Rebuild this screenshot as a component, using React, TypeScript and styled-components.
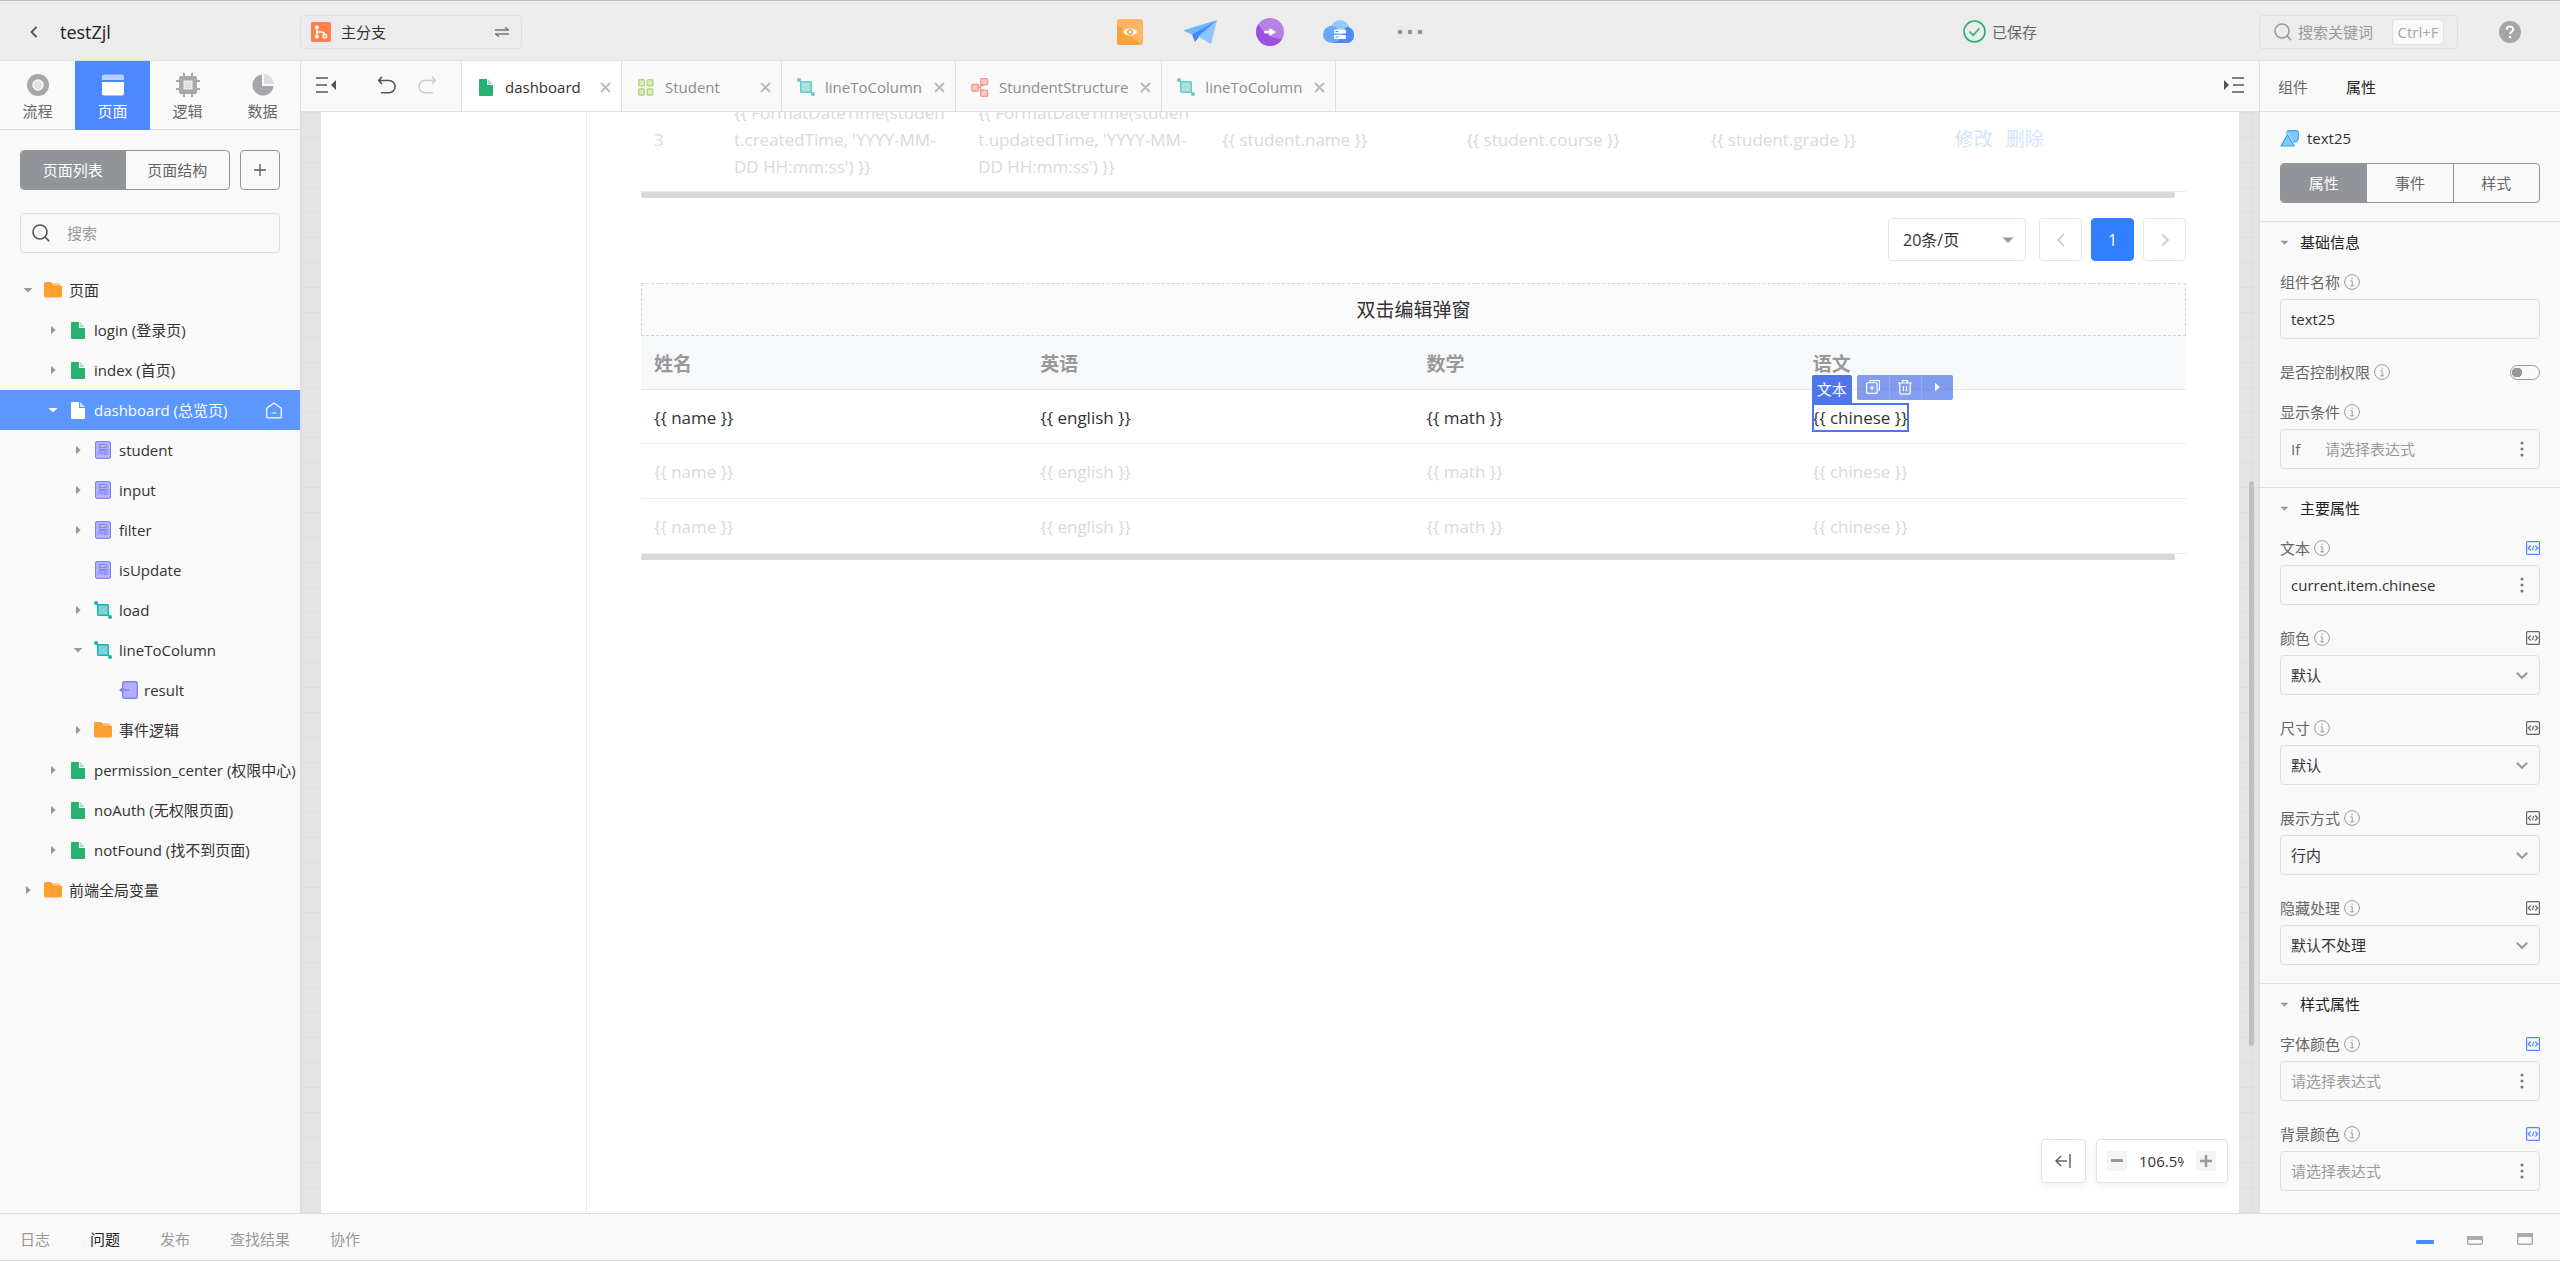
import React from "react";
import styled, { createGlobalStyle, css } from "styled-components";

const color = {
  bar: "#ececec",
  panel: "#f9f9f9",
  line: "#dfdfdf",
  accent: "#4c88ff",
  selected: "#5c97ff",
  text: "#333333",
  sub: "#666666",
  mute: "#999999",
  slate: "#919499",
  select: "#4e75ea",
};

const GlobalStyle = createGlobalStyle`
  *, *::before, *::after { box-sizing: border-box; }
  body {
    margin: 0;
    background: ${color.panel};
    color: ${color.text};
    font: 400 15px/20px "Open Sans", "Noto Sans CJK SC", sans-serif;
  }
  button, input, select { font: inherit; color: inherit; margin: 0; }
  button { background: none; border: 0; padding: 0; cursor: pointer; }
  svg { display: block; flex: none; }
`;

/* ---------- frame ---------- */

const Shell = styled.div`
  display: flex;
  flex-direction: column;
  height: 100vh;
  min-width: 1400px;
`;

const Header = styled.header`
  flex: none;
  display: grid;
  grid-template-columns: 1fr auto 1fr;
  align-items: center;
  height: 61px;
  padding-top: 2px;
  background: ${color.bar};
  border-top: 1px solid #c0c0c0;
  border-bottom: 1px solid ${color.line};
`;

const Workspace = styled.div`
  flex: 1;
  min-height: 0;
  display: grid;
  grid-template-columns: 301px minmax(0, 1fr) 301px;
`;

/* ---------- header ---------- */

const HeaderLeft = styled.div`
  display: flex;
  align-items: center;
`;

const TitleGroup = styled.div`
  display: flex;
  align-items: center;
  gap: 20px;
  width: 300px;
  padding-left: 28px;
`;

const Title = styled.h1`
  margin: 0;
  font-size: 18px;
  line-height: 24px;
  font-weight: 400;
  color: #222;
`;

const BranchButton = styled.button`
  display: flex;
  align-items: center;
  gap: 10px;
  width: 222px;
  height: 34px;
  padding: 0 12px 0 10px;
  border: 1px solid ${color.line};
  border-radius: 4px;
`;

const Grow = styled.span`
  flex: 1;
  text-align: left;
`;

const Actions = styled.nav`
  display: flex;
  margin-right: 20px;
`;

const ActionButton = styled.button`
  display: flex;
  align-items: center;
  justify-content: center;
  width: 70px;
  height: 40px;
`;

const HeaderRight = styled.div`
  display: flex;
  align-items: center;
  justify-content: flex-end;
  padding-right: 39px;
`;

const Saved = styled.span`
  display: flex;
  align-items: center;
  gap: 6px;
  margin-right: 222px;
  color: ${color.sub};
`;

const KeywordSearch = styled.label`
  display: flex;
  align-items: center;
  width: 199px;
  height: 34px;
  margin-right: 41px;
  padding: 0 13px 0 8px;
  border: 1px solid ${color.line};
  border-radius: 4px;
  color: #a6a6a6;
  kbd {
    flex: none;
    width: 52px;
    height: 26px;
    border: 1px solid ${color.line};
    border-radius: 4px;
    background: ${color.panel};
    font: inherit;
    line-height: 24px;
    text-align: center;
  }
`;

const BareInput = styled.input`
  flex: 1;
  min-width: 0;
  width: 0;
  height: 100%;
  padding: 0;
  border: 0;
  outline: 0;
  background: none;
  &::placeholder { color: ${color.mute}; opacity: 1; }
`;

/* ---------- left side ---------- */

const Sidebar = styled.aside`
  display: flex;
  flex-direction: column;
  min-height: 0;
  background: ${color.panel};
  border-right: 1px solid ${color.line};
`;

const ModuleTabs = styled.nav`
  display: grid;
  grid-template-columns: repeat(4, 1fr);
  height: 69px;
  border-bottom: 1px solid ${color.line};
`;

const ModuleTab = styled.button<{ $on?: boolean }>`
  display: flex;
  flex-direction: column;
  align-items: center;
  justify-content: center;
  gap: 4px;
  height: 69px;
  padding-top: 2px;
  color: ${(p) => (p.$on ? "#fff" : color.sub)};
  background: ${(p) => (p.$on ? color.accent : "transparent")};
`;

const SideControls = styled.div`
  display: flex;
  gap: 10px;
  padding: 20px 20px 23px;
`;

const Segmented = styled.div`
  flex: 1;
  display: flex;
  height: 40px;
  overflow: hidden;
  border: 1px solid ${color.slate};
  border-radius: 4px;
`;

const Segment = styled.button<{ $on?: boolean }>`
  flex: 1;
  color: ${(p) => (p.$on ? "#fff" : color.sub)};
  background: ${(p) => (p.$on ? color.slate : "transparent")};
  & + & { border-left: 1px solid ${color.slate}; }
`;

const AddButton = styled.button`
  display: flex;
  align-items: center;
  justify-content: center;
  width: 40px;
  height: 40px;
  border: 1px solid ${color.slate};
  border-radius: 4px;
`;

const SideSearch = styled.label`
  display: flex;
  align-items: center;
  gap: 17px;
  height: 40px;
  margin: 0 20px 17px;
  padding: 0 11px;
  border: 1px solid ${color.line};
  border-radius: 4px;
`;

const Tree = styled.ul`
  margin: 0;
  padding: 0;
  list-style: none;
`;

const TreeRow = styled.button<{ $depth: number; $on?: boolean }>`
  display: flex;
  align-items: center;
  width: 100%;
  height: 40px;
  padding: 0 18px 0 ${(p) => 15 + p.$depth * 25}px;
  white-space: nowrap;
  text-align: left;
  color: ${(p) => (p.$on ? "#fff" : color.text)};
  background: ${(p) => (p.$on ? color.selected : "transparent")};
`;

const Slot = styled.span<{ $w: number }>`
  flex: none;
  display: flex;
  justify-content: center;
  width: ${(p) => p.$w}px;
`;

const TreeLabel = styled.span`
  flex: 1;
  padding-left: 3px;
`;

const LocalBadge = styled.span`
  width: 16px;
  height: 18px;
  border: 1px solid #8080fa;
  border-radius: 2px;
  background: #b1b1fd;
  color: #7d7df5;
  font-size: 11px;
  line-height: 16px;
  text-align: center;
`;

/* ---------- centre ---------- */

const Centre = styled.main`
  display: flex;
  flex-direction: column;
  min-width: 0;
  min-height: 0;
`;

const TabBar = styled.div`
  flex: none;
  display: flex;
  height: 51px;
  background: ${color.panel};
  border-bottom: 1px solid ${color.line};
`;

const Tools = styled.div`
  display: flex;
  align-items: center;
  width: 160px;
  padding: 0 0 2px 15px;
`;

const ToolButton = styled.button<{ $gap?: number }>`
  display: flex;
  align-items: center;
  justify-content: center;
  width: 20px;
  height: 24px;
  margin-right: ${(p) => p.$gap ?? 20}px;
`;

const FileTab = styled.div<{ $on?: boolean }>`
  display: flex;
  align-items: center;
  gap: 12px;
  min-width: ${(p) => (p.$on ? 161 : 160)}px;
  padding: 2px 10px 0 15px;
  color: ${(p) => (p.$on ? color.text : "#8c8c8c")};
  background: ${(p) => (p.$on ? "#fff" : "transparent")};
  border-right: 1px solid ${color.line};
  ${(p) => p.$on && css`border-left: 1px solid ${color.line};`}
`;

const FileTabOpen = styled.button`
  flex: 1;
  display: flex;
  align-items: center;
  gap: 10px;
`;

const TabEnd = styled.div`
  flex: 1;
  display: flex;
  align-items: center;
  justify-content: flex-end;
  padding: 0 15px 2px 0;
`;

const Stage = styled.div`
  position: relative;
  flex: 1;
  min-height: 0;
  display: flex;
  padding: 0 20px;
  background-color: #e4e4e4;
  background-image: linear-gradient(#dedede 1px, transparent 1px),
    linear-gradient(90deg, #dedede 1px, transparent 1px);
  background-size: 25px 25px;
`;

const Page = styled.div`
  flex: 1;
  display: grid;
  grid-template-columns: 266px minmax(0, 1fr);
  overflow: hidden;
  background: #fff;
`;

const PageMenu = styled.div`
  border-right: 1px solid #ebebeb;
`;

const PageBody = styled.div`
  margin-top: -24px;
  padding: 0 53px 0 54px;
`;

const ScrollThumb = styled.div`
  position: absolute;
  top: 369px;
  right: 5px;
  width: 5px;
  height: 565px;
  border-radius: 3px;
  background: #c0c0c0;
`;

const DataTable = styled.table`
  width: 100%;
  table-layout: fixed;
  border-collapse: separate;
  border-spacing: 0;
`;

const HeadCell = styled.th`
  height: 54px;
  padding: 4px 13px 0;
  background: #f7f8fa;
  border-bottom: 1px solid #e5e5e5;
  color: ${color.mute};
  font-size: 19px;
  line-height: 27px;
  font-weight: 700;
  text-align: left;
`;

const Cell = styled.td<{ $faded?: boolean }>`
  height: ${(p) => (p.$faded ? 55 : 54)}px;
  padding: 1px 13px 0;
  border-bottom: 1px solid #ececec;
  color: ${(p) => (p.$faded ? "#d9d9d9" : color.text)};
  font-size: 17px;
  line-height: 27px;
  white-space: nowrap;
`;

const TallCell = styled(Cell)`
  height: 104px;
  padding-top: 0;
`;

const RowLink = styled.a`
  margin-right: 13px;
  color: #d5e2ff;
  font-size: 19px;
  text-decoration: none;
`;

const HScroll = styled.div`
  height: 6px;
  margin-right: 11px;
  border-radius: 2px;
  background: #d8d8d8;
`;

const Pager = styled.div`
  display: flex;
  justify-content: flex-end;
  gap: 9px;
  padding: 20px 0 22px;
  font-size: 16px;
`;

const Stack = styled.span`
  display: grid;
  align-items: center;
  & > * { grid-area: 1 / 1; }
  & > svg { justify-self: end; margin-right: 12px; pointer-events: none; }
`;

const PageSizeStack = styled(Stack)`
  width: 138px;
  margin-right: 4px;
`;

const PageSize = styled.select`
  width: 100%;
  height: 43px;
  padding: 0 14px;
  appearance: none;
  border: 1px solid #e5e5e5;
  border-radius: 4px;
  background: #fff;
`;

const PagerButton = styled.button<{ $on?: boolean }>`
  display: flex;
  align-items: center;
  justify-content: center;
  width: 43px;
  height: 43px;
  border: 1px solid ${(p) => (p.$on ? "#337eff" : "#e5e5e5")};
  border-radius: 4px;
  color: #fff;
  background: ${(p) => (p.$on ? "#337eff" : "#fff")};
`;

const DialogSlot = styled.div`
  height: 53px;
  border: 1px dashed #d4d4d4;
  background: #fafafa;
  font-size: 19px;
  line-height: 52px;
  text-align: center;
`;

const Picked = styled.span`
  position: relative;
  display: inline-block;
  outline: 2px solid ${color.select};
  outline-offset: -1px;
`;

const PickedTag = styled.span`
  position: absolute;
  left: -1px;
  bottom: 100%;
  width: 40px;
  height: 29px;
  border-radius: 2px 2px 0 0;
  background: ${color.select};
  color: #fff;
  font-size: 15px;
  line-height: 29px;
  text-align: center;
`;

const PickedTools = styled.span`
  position: absolute;
  left: 44px;
  bottom: calc(100% + 4px);
  display: flex;
  border-radius: 2px;
  background: rgba(78, 117, 234, 0.7);
  button {
    display: flex;
    align-items: center;
    justify-content: center;
    width: 32px;
    height: 25px;
  }
  button + button { border-left: 1px solid #93a9f3; }
`;

const Floating = styled.div`
  position: absolute;
  right: 31px;
  bottom: 30px;
  display: flex;
  gap: 10px;
`;

const FloatCard = styled.div`
  display: flex;
  align-items: center;
  height: 44px;
  padding: 0 11px 0 10px;
  border: 1px solid #e2e2e2;
  border-radius: 4px;
  background: #fff;
  box-shadow: 0 3px 8px rgba(0, 0, 0, 0.06);
`;

const FitButton = styled(FloatCard).attrs({ as: "button" })`
  justify-content: center;
  width: 45px;
`;

const ZoomStep = styled.button`
  display: flex;
  align-items: center;
  justify-content: center;
  width: 20px;
  height: 20px;
  border-radius: 2px;
  background: #f4f4f4;
`;

const ZoomValue = styled.input`
  width: 45px;
  height: 24px;
  margin: 0 12px;
  padding: 0;
  border: 0;
  outline: 0;
  background: none;
`;

/* ---------- right side ---------- */

const Inspector = styled.aside`
  min-height: 0;
  overflow: hidden;
  background: ${color.panel};
  border-left: 1px solid ${color.line};
`;

const InspectorTabs = styled.nav`
  display: flex;
  gap: 38px;
  height: 51px;
  padding: 2px 18px 0;
  border-bottom: 1px solid ${color.line};
`;

const PlainTab = styled.button<{ $on?: boolean }>`
  color: ${(p) => (p.$on ? "#222" : color.mute)};
`;

const InspectorTab = styled(PlainTab)`
  color: ${(p) => (p.$on ? "#222" : color.sub)};
`;

const Identity = styled.div`
  padding: 16px 20px 18px;
`;

const IdentityName = styled.div`
  display: flex;
  align-items: center;
  gap: 8px;
  height: 20px;
  margin-bottom: 15px;
`;

const Section = styled.section`
  padding: 0 20px 18px;
  border-top: 1px solid ${color.line};
`;

const SectionTitle = styled.h2`
  display: flex;
  align-items: center;
  gap: 11px;
  height: 40px;
  margin: 0 0 3px;
  font-size: 15px;
  line-height: 20px;
  font-weight: 400;
  color: #222;
`;

const Field = styled.div<{ $tight?: boolean }>`
  margin-top: ${(p) => (p.$tight ? 6 : 16)}px;
  &:first-of-type { margin-top: 0; }
`;

const FieldHead = styled.div`
  display: flex;
  align-items: center;
  gap: 4px;
  height: 34px;
  color: ${color.sub};
`;

const Push = styled.span`
  display: flex;
  margin-left: auto;
`;

const Box = styled.div`
  display: flex;
  align-items: center;
  height: 40px;
  padding: 0 10px;
  border: 1px solid ${color.line};
  border-radius: 4px;
`;

const Prefix = styled.span`
  width: 34px;
  color: ${color.sub};
`;

const Select = styled.select`
  width: 100%;
  height: 40px;
  padding: 0 10px;
  appearance: none;
  border: 1px solid ${color.line};
  border-radius: 4px;
  background: transparent;
`;

const Switch = styled.input`
  appearance: none;
  display: block;
  width: 30px;
  height: 15px;
  margin: 0;
  border: 1px solid ${color.mute};
  border-radius: 8px;
  background: radial-gradient(circle at 6px 50%, ${color.mute} 5px, transparent 5px);
`;

/* ---------- bottom ---------- */

const Footer = styled.footer`
  flex: none;
  display: flex;
  align-items: center;
  height: 48px;
  margin-bottom: 1px;
  padding: 4px 26px 0 20px;
  border-top: 1px solid ${color.line};
  border-bottom: 1px solid ${color.line};
`;

const FooterTabs = styled.nav`
  flex: 1;
  display: flex;
  gap: 40px;
`;

const FooterTools = styled.div`
  display: flex;
  gap: 32px;
`;

/* ---------- drawings ---------- */

const Chevron = ({ dir, stroke = "#555", size = 12, weight = 1.6 }: {
  dir: "left" | "right" | "down"; stroke?: string; size?: number; weight?: number;
}) => (
  <svg width={size} height={size} viewBox="0 0 12 12" fill="none" stroke={stroke} strokeWidth={weight}>
    <path d={{ left: "M8.5 1 3.5 6l5 5", right: "M3.5 1l5 5-5 5", down: "M.8 3.800l5.200 5 5.200-5" }[dir]} />
  </svg>
);

const Caret = ({ open, fill = "#999", size = 10 }: { open?: boolean; fill?: string; size?: number }) => (
  <svg width={size} height={size} viewBox="0 0 10 10" fill={fill}>
    <path d={open ? "M.5 3h9L5 7.5z" : "M3 .8v8.4L7.7 5z"} />
  </svg>
);

const Magnifier = ({ stroke = "#555" }: { stroke?: string }) => (
  <svg width="18" height="18" viewBox="0 0 18 18" fill="none" stroke={stroke} strokeWidth="1.6">
    <circle cx="8" cy="8" r="7" />
    <path d="M13 13l4.2 4.2" />
  </svg>
);

const FolderIcon = () => (
  <svg width="18" height="16" viewBox="0 0 18 16">
    <path d="M8 1h6.5A1.5 1.5 0 0 1 16 2.500V6H8z" fill="#fdc98b" />
    <path d="M0 1.500A1.500 1.500 0 0 1 1.500 0H7l2.500 3.500h7A1.500 1.500 0 0 1 18 5v9a1.500 1.500 0 0 1-1.500 1.500h-15A1.500 1.500 0 0 1 0 14z" fill="#fca130" />
  </svg>
);

const FileIcon = ({ fill = "#27b36f", fold = "#a6dfc4" }: { fill?: string; fold?: string }) => (
  <svg width="14" height="17" viewBox="0 0 14 17">
    <path d="M1 0h7v6h6v10a1 1 0 0 1-1 1H1a1 1 0 0 1-1-1V1a1 1 0 0 1 1-1z" fill={fill} />
    <path d="M9 0l5 5H9z" fill={fold} />
  </svg>
);

const LogicIcon = ({ faded }: { faded?: boolean }) => (
  <svg width="18" height="18" viewBox="0 0 18 18" opacity={faded ? 0.65 : 1}>
    <path d="M2 2l3 3M13 13l3 3" stroke="#13b5b1" strokeWidth="1.500" />
    <rect x="3.700" y="3.700" width="10.600" height="10.600" rx="1" fill="#7fd4d3" stroke="#13b5b1" strokeWidth="1.500" />
    <circle cx="2" cy="2" r="2" fill="#13b5b1" />
    <circle cx="16" cy="16" r="2" fill="#13b5b1" />
  </svg>
);

const ResultIcon = () => (
  <svg width="19" height="18" viewBox="0 0 19 18">
    <rect x="3.700" y=".7" width="14.600" height="16.600" rx="2" fill="#b1b1fd" stroke="#8080fa" strokeWidth="1.400" />
    <path d="M0 9l4-3v2.300h6v1.400H4V12z" fill="#8080fa" />
  </svg>
);

const EntityIcon = () => (
  <svg width="16" height="17" viewBox="0 0 16 17" fill="#dcebc2" stroke="#b5d37f" strokeWidth="1.400">
    <rect x=".7" y=".7" width="5.600" height="6" rx="1" />
    <rect x="9.200" y=".7" width="5.600" height="6" rx="1" />
    <rect x=".7" y="10" width="5.600" height="6" rx="1" />
    <rect x="9.200" y="10" width="5.600" height="6" rx="1" />
  </svg>
);

const StructureIcon = () => (
  <svg width="18" height="19" viewBox="0 0 18 19" fill="#f9c9c2" stroke="#f2998d" strokeWidth="1.300">
    <path d="M7 9.500h2M12 6v1.500H9.500v4.500H12V13" fill="none" />
    <rect x=".7" y="6.500" width="6.600" height="6.500" rx="1" />
    <rect x="9.700" y=".7" width="7" height="6" rx="1" />
    <rect x="9.700" y="12.300" width="7" height="6" rx="1" />
  </svg>
);

const HomeIcon = () => (
  <svg width="16" height="17" viewBox="0 0 16 17" fill="none" stroke="#fff" strokeWidth="1.200">
    <path d="M.7 6.200L8 .9l7.300 5.300v8.600a1 1 0 0 1-1 1H1.700a1 1 0 0 1-1-1zM5.500 11h5" />
  </svg>
);

const FlowIcon = () => (
  <svg width="24" height="24" viewBox="0 0 24 24">
    <circle cx="12" cy="12" r="11" fill="#a5a7aa" />
    <circle cx="12" cy="12" r="5" fill="#e2e2e2" stroke="#f9f9f9" strokeWidth="1.500" />
  </svg>
);

const PagesIcon = () => (
  <svg width="24" height="24" viewBox="0 0 24 24">
    <path d="M1 7V3.500A2 2 0 0 1 3 1.500h18a2 2 0 0 1 2 2V7z" fill="#b7cfff" />
    <path d="M1 9h22v11.500a2 2 0 0 1-2 2H3a2 2 0 0 1-2-2z" fill="#fff" />
  </svg>
);

const ChipIcon = () => (
  <svg width="24" height="24" viewBox="0 0 24 24">
    <path d="M8 0v24M16 0v24M0 8h24M0 16h24" stroke="#a5a7aa" strokeWidth="2" />
    <rect x="3" y="3" width="18" height="18" rx="2" fill="#a5a7aa" />
    <rect x="8" y="8" width="8" height="8" fill="#dedede" stroke="#f3f3f3" />
  </svg>
);

const PieIcon = () => (
  <svg width="24" height="24" viewBox="0 0 24 24">
    <path d="M11 1.500A10.600 10.600 0 1 0 22.500 13H11z" fill="#a5a7aa" />
    <path d="M13 1a10.500 10.500 0 0 1 10 10H13z" fill="#dcdcdc" />
  </svg>
);

const BranchIcon = () => (
  <svg width="20" height="20" viewBox="0 0 20 20">
    <rect width="20" height="20" rx="2" fill="#ff8149" />
    <g fill="none" stroke="#fff" strokeWidth="1.500">
      <path d="M6 5v10M6 10h4.500a3 3 0 0 1 3 2" />
      <circle cx="13.800" cy="14" r="1.800" />
    </g>
    <circle cx="6" cy="5.500" r="2" fill="#fff" />
    <circle cx="6" cy="14.500" r="2" fill="#fff" />
  </svg>
);

const SwapIcon = () => (
  <svg width="14" height="10" viewBox="0 0 14 10" fill="none" stroke="#777" strokeWidth="1.400">
    <path d="M0 3h13.500L10 .3M14 7H.5L4 9.700" />
  </svg>
);

const PreviewIcon = () => (
  <svg width="26" height="26" viewBox="0 0 26 26">
    <rect width="26" height="26" rx="3" fill="#ffb366" />
    <path d="M0 5l24 21H3a3 3 0 0 1-3-3z" fill="#f8a23c" />
    <path d="M6 13C9.500 8 16.500 8 20 13 16.500 18 9.500 18 6 13z" fill="#fff" />
    <circle cx="13" cy="13" r="3" fill="#f8a23c" />
    <circle cx="13" cy="13" r="1.400" fill="#fff" />
  </svg>
);

const PlaneIcon = () => (
  <svg width="34" height="26" viewBox="0 0 34 26">
    <path d="M0 11.500L34 1 9 15.500z" fill="#6fb5ff" />
    <path d="M34 1L9 15.500l3 7.500 4-5z" fill="#3d8bfd" />
    <path d="M34 1L15 17.500 28 25z" fill="#8cc5ff" />
  </svg>
);

const PublishIcon = () => (
  <svg width="28" height="28" viewBox="0 0 28 28">
    <circle cx="14" cy="14" r="14" fill="#b583e6" />
    <path d="M0 14a14 14 0 0 0 26 7.200C18 21 8 17 2.500 6A14 14 0 0 0 0 14z" fill="#9c51e0" />
    <path d="M8 12.800h5.500V10l6.500 4-6.500 4v-2.800H8z" fill="#fff" />
  </svg>
);

const CloudIcon = () => (
  <svg width="34" height="24" viewBox="0 0 34 24">
    <circle cx="17" cy="10" r="10" fill="#93caff" />
    <circle cx="8.500" cy="14.500" r="8.500" fill="#6aa8ff" />
    <path d="M25.500 7a8.500 8.500 0 0 1 0 16H8c6-1 10-4 11-10 1-4 4-6 6.500-6z" fill="#4c88ff" />
    <rect x="11" y="9.500" width="12" height="4" rx="1" fill="#fff" />
    <rect x="11" y="15" width="12" height="4" rx="1" fill="#fff" />
    <path d="M12.500 11.500h3M12.500 17h3" stroke="#4c88ff" />
  </svg>
);

const MoreIcon = () => (
  <svg width="26" height="6" viewBox="0 0 26 6" fill="#8b919c">
    <circle cx="3" cy="3" r="2.300" />
    <circle cx="13" cy="3" r="2.300" />
    <circle cx="23" cy="3" r="2.300" />
  </svg>
);

const CheckIcon = () => (
  <svg width="23" height="23" viewBox="0 0 23 23" fill="none" stroke="#27b36f" strokeWidth="1.600">
    <circle cx="11.500" cy="11.500" r="10.500" />
    <path d="M6.500 11.500l3.700 3.800 6.300-7" />
  </svg>
);

const HelpIcon = () => (
  <svg width="22" height="22" viewBox="0 0 22 22">
    <circle cx="11" cy="11" r="11" fill="#a3a5a8" />
    <path d="M7.800 8.600c.2-4.200 6.600-3.900 6.400-.1-.1 2.300-3.200 2.200-3.200 4.700" fill="none" stroke="#fff" strokeWidth="2" />
    <circle cx="11" cy="16" r="1.300" fill="#fff" />
  </svg>
);

const FoldIcon = ({ flip }: { flip?: boolean }) => (
  <svg width="20" height="16" viewBox="0 0 20 16">
    <path d={flip ? "M8 1h12M9 8h11M8 15h12" : "M0 1h12M0 8h11M0 15h12"} stroke="#555" strokeWidth="1.600" />
    <path d={flip ? "M0 3v10l5-5z" : "M20 3v10l-5-5z"} fill="#555" />
  </svg>
);

const UndoIcon = ({ redo }: { redo?: boolean }) => (
  <svg width="18" height="18" viewBox="0 0 18 18" fill="none" stroke={redo ? "#ccc" : "#555"} strokeWidth="1.600">
    <path d={redo ? "M14 0.800l3.300 3.700L14 8M17 4.500H7a6 6 0 0 0 0 12.200h8" : "M4 .8L.7 4.500 4 8M1 4.500h10a6 6 0 0 1 0 12.200H3"} />
  </svg>
);

const CloseIcon = () => (
  <svg width="11" height="11" viewBox="0 0 11 11" stroke="#b8b8b8" strokeWidth="1.800">
    <path d="M1 1l9 9M10 1l-9 9" />
  </svg>
);

const CopyIcon = () => (
  <svg width="14" height="14" viewBox="0 0 14 14" fill="none" stroke="#fff" strokeWidth="1.100">
    <path d="M4 2.500V.6h9.400V10h-1.900M6 5.500v5M3.500 8h5" />
    <rect x=".6" y="2.800" width="10.400" height="10.600" rx="1" />
  </svg>
);

const TrashIcon = () => (
  <svg width="14" height="15" viewBox="0 0 14 15" fill="none" stroke="#fff" strokeWidth="1.200">
    <path d="M0 3h14M4.500 2.500V.7h5v1.800M1.800 3v10a1.200 1.200 0 0 0 1.200 1.200h8a1.200 1.200 0 0 0 1.200-1.200V3M5.500 6v5M8.500 6v5" />
  </svg>
);

const FitIcon = () => (
  <svg width="16" height="14" viewBox="0 0 16 14" fill="none" stroke="#666" strokeWidth="1.500">
    <path d="M12 7H1M6 2L1 7l5 5M15 0v14" />
  </svg>
);

const TextShapeIcon = () => (
  <svg width="19" height="17" viewBox="0 0 19 17">
    <path d="M8 .6h8a2.200 2.200 0 0 1 2.300 2.300v5a4 4 0 0 1-4 4H11L6.500 4z" fill="#82c9fb" stroke="#31a5f5" strokeWidth="1.200" />
    <path d="M7.500 4.500L1 16h13z" fill="#82c9fb" stroke="#f9f9f9" strokeWidth="2.500" />
    <path d="M7.500 4.500L1 16h13z" fill="#82c9fb" stroke="#31a5f5" strokeWidth="1.200" />
  </svg>
);

const InfoIcon = () => (
  <svg width="16" height="16" viewBox="0 0 16 16" fill="none" stroke="#999">
    <circle cx="8" cy="8" r="7.400" />
    <path d="M6.500 6.800h1.700v5M6.300 11.800h3.700M7.300 4.300h1.400" />
  </svg>
);

const CodeIcon = ({ on }: { on?: boolean }) => (
  <svg width="14" height="14" viewBox="0 0 14 14" fill="none" stroke={on ? "#4c88ff" : "#666"} strokeWidth="1.200">
    <rect x=".6" y=".6" width="12.800" height="12.800" rx="1" />
    <path d="M4.800 4.500L2.300 7l2.500 2.500M9.200 4.500L11.700 7 9.200 9.500M7.500 4.800l-1 4.400" />
  </svg>
);

const KebabIcon = () => (
  <svg width="4" height="16" viewBox="0 0 4 16" fill="#777">
    <circle cx="2" cy="2" r="1.500" />
    <circle cx="2" cy="8" r="1.500" />
    <circle cx="2" cy="14" r="1.500" />
  </svg>
);

const DockIcon = ({ kind }: { kind: "line" | "half" | "full" }) => (
  <svg width="18" height="12" viewBox="0 0 18 12">
    {kind === "line" && <rect y="7" width="18" height="4" rx="1" fill="#4c88ff" />}
    {kind === "half" && (
      <g>
        <rect x="1.700" y="3.700" width="14.600" height="7.600" rx="1" fill="none" stroke="#aaa" strokeWidth="1.400" />
        <rect x="1" y="3" width="16" height="4" rx="1" fill="#aaa" />
      </g>
    )}
    {kind === "full" && (
      <g>
        <rect x="1.700" y=".7" width="14.600" height="10.600" rx="1" fill="none" stroke="#aaa" strokeWidth="1.400" />
        <rect x="1" y="0" width="16" height="4" rx="1" fill="#aaa" />
      </g>
    )}
  </svg>
);

/* ---------- data ---------- */

type Kind = "folder" | "file" | "local" | "logic" | "result" | "entity" | "structure";
type Node = { label: string; depth: number; kind: Kind; open?: boolean; leaf?: boolean; on?: boolean };

const nodes: Node[] = [
  { label: "页面", depth: 0, kind: "folder", open: true },
  { label: "login (登录页)", depth: 1, kind: "file" },
  { label: "index (首页)", depth: 1, kind: "file" },
  { label: "dashboard (总览页)", depth: 1, kind: "file", open: true, on: true },
  { label: "student", depth: 2, kind: "local" },
  { label: "input", depth: 2, kind: "local" },
  { label: "filter", depth: 2, kind: "local" },
  { label: "isUpdate", depth: 2, kind: "local", leaf: true },
  { label: "load", depth: 2, kind: "logic" },
  { label: "lineToColumn", depth: 2, kind: "logic", open: true },
  { label: "result", depth: 3, kind: "result", leaf: true },
  { label: "事件逻辑", depth: 2, kind: "folder" },
  { label: "permission_center (权限中心)", depth: 1, kind: "file" },
  { label: "noAuth (无权限页面)", depth: 1, kind: "file" },
  { label: "notFound (找不到页面)", depth: 1, kind: "file" },
  { label: "前端全局变量", depth: 0, kind: "folder" },
];

const files: { label: string; kind: Kind; on?: boolean }[] = [
  { label: "dashboard", kind: "file", on: true },
  { label: "Student", kind: "entity" },
  { label: "lineToColumn", kind: "logic" },
  { label: "StundentStructure", kind: "structure" },
  { label: "lineToColumn", kind: "logic" },
];

const KindIcon = ({ kind, on, faded }: { kind: Kind; on?: boolean; faded?: boolean }) => {
  switch (kind) {
    case "folder": return <FolderIcon />;
    case "file": return on ? <FileIcon fill="#fff" fold="#cfe0ff" /> : <FileIcon />;
    case "local": return <LocalBadge>局</LocalBadge>;
    case "logic": return <LogicIcon faded={faded} />;
    case "result": return <ResultIcon />;
    case "entity": return <EntityIcon />;
    case "structure": return <StructureIcon />;
  }
};

/* ---------- inspector fields ---------- */

const FieldLabel = ({ id, text, code }: { id: string; text: string; code?: "on" | "off" }) => (
  <FieldHead>
    <label htmlFor={id}>{text}</label>
    <InfoIcon />
    {code && <Push><button aria-label={`${text} 表达式`}><CodeIcon on={code === "on"} /></button></Push>}
  </FieldHead>
);

const ChoiceField = ({ id, text, value }: { id: string; text: string; value: string }) => (
  <Field>
    <FieldLabel id={id} text={text} code="off" />
    <Stack>
      <Select id={id} defaultValue={value}><option>{value}</option></Select>
      <Chevron dir="down" stroke="#999" weight={2} />
    </Stack>
  </Field>
);

const ExpressionField = ({ id, text, value, prefix, code, tight }: {
  id: string; text: string; value?: string; prefix?: string; code?: "on" | "off"; tight?: boolean;
}) => (
  <Field $tight={tight}>
    <FieldLabel id={id} text={text} code={code} />
    <Box>
      {prefix && <Prefix>{prefix}</Prefix>}
      <BareInput id={id} defaultValue={value} placeholder="请选择表达式" />
      <Slot $w={14}><KebabIcon /></Slot>
    </Box>
  </Field>
);

const GroupTitle = ({ children }: { children: string }) => (
  <SectionTitle><Caret open size={9} />{children}</SectionTitle>
);

const scoreColumns = ["name", "english", "math", "chinese"];

export default function App() {
  return (
    <Shell>
      <GlobalStyle />
      <Header>
        <HeaderLeft>
          <TitleGroup>
            <button aria-label="返回"><Chevron dir="left" weight={1.8} /></button>
            <Title>testZjl</Title>
          </TitleGroup>
          <BranchButton>
            <BranchIcon />
            <Grow>主分支</Grow>
            <SwapIcon />
          </BranchButton>
        </HeaderLeft>
        <Actions>
          <ActionButton aria-label="预览"><PreviewIcon /></ActionButton>
          <ActionButton aria-label="发送"><PlaneIcon /></ActionButton>
          <ActionButton aria-label="导出"><PublishIcon /></ActionButton>
          <ActionButton aria-label="云端"><CloudIcon /></ActionButton>
          <ActionButton aria-label="更多"><MoreIcon /></ActionButton>
        </Actions>
        <HeaderRight>
          <Saved><CheckIcon />已保存</Saved>
          <KeywordSearch>
            <Slot $w={30}><Magnifier stroke="#999" /></Slot>
            <BareInput placeholder="搜索关键词" aria-label="搜索关键词" />
            <kbd>Ctrl+F</kbd>
          </KeywordSearch>
          <button aria-label="帮助"><HelpIcon /></button>
        </HeaderRight>
      </Header>

      <Workspace>
        <Sidebar>
          <ModuleTabs>
            <ModuleTab><FlowIcon />流程</ModuleTab>
            <ModuleTab $on><PagesIcon />页面</ModuleTab>
            <ModuleTab><ChipIcon />逻辑</ModuleTab>
            <ModuleTab><PieIcon />数据</ModuleTab>
          </ModuleTabs>
          <SideControls>
            <Segmented>
              <Segment $on>页面列表</Segment>
              <Segment>页面结构</Segment>
            </Segmented>
            <AddButton aria-label="新增">
              <svg width="12" height="12" viewBox="0 0 12 12" stroke="#555" strokeWidth="1.300"><path d="M6 0v12M0 6h12" /></svg>
            </AddButton>
          </SideControls>
          <SideSearch>
            <Magnifier />
            <BareInput placeholder="搜索" aria-label="搜索" />
          </SideSearch>
          <Tree>
            {nodes.map((n) => (
              <li key={n.label}>
                <TreeRow $depth={n.depth} $on={n.on}>
                  <Slot $w={25}>{!n.leaf && <Caret open={n.open} fill={n.on ? "#fff" : "#999"} />}</Slot>
                  <Slot $w={26}><KindIcon kind={n.kind} on={n.on} /></Slot>
                  <TreeLabel>{n.label}</TreeLabel>
                  {n.on && <HomeIcon />}
                </TreeRow>
              </li>
            ))}
          </Tree>
        </Sidebar>

        <Centre>
          <TabBar>
            <Tools>
              <ToolButton aria-label="收起左侧" $gap={41}><FoldIcon /></ToolButton>
              <ToolButton aria-label="撤销"><UndoIcon /></ToolButton>
              <ToolButton aria-label="重做" $gap={0}><UndoIcon redo /></ToolButton>
            </Tools>
            {files.map((f, i) => (
              <FileTab key={i} $on={f.on}>
                <FileTabOpen><Slot $w={18}><KindIcon kind={f.kind} faded /></Slot>{f.label}</FileTabOpen>
                <button aria-label={`关闭 ${f.label}`}><CloseIcon /></button>
              </FileTab>
            ))}
            <TabEnd><button aria-label="收起右侧"><FoldIcon flip /></button></TabEnd>
          </TabBar>

          <Stage>
            <Page>
              <PageMenu />
              <PageBody>
                <DataTable>
                  <colgroup>
                    <col style={{ width: 80 }} /><col /><col /><col /><col /><col /><col />
                  </colgroup>
                  <tbody>
                    <tr>
                      <TallCell $faded>3</TallCell>
                      <TallCell $faded>{"{{ FormatDateTime(studen"}<br />{"t.createdTime, 'YYYY-MM-"}<br />{"DD HH:mm:ss') }}"}</TallCell>
                      <TallCell $faded>{"{{ FormatDateTime(studen"}<br />{"t.updatedTime, 'YYYY-MM-"}<br />{"DD HH:mm:ss') }}"}</TallCell>
                      <TallCell $faded>{"{{ student.name }}"}</TallCell>
                      <TallCell $faded>{"{{ student.course }}"}</TallCell>
                      <TallCell $faded>{"{{ student.grade }}"}</TallCell>
                      <TallCell $faded><RowLink href="#edit">修改</RowLink><RowLink href="#remove">删除</RowLink></TallCell>
                    </tr>
                  </tbody>
                </DataTable>
                <HScroll />
                <Pager>
                  <PageSizeStack>
                    <PageSize aria-label="每页条数" defaultValue="20条/页"><option>20条/页</option></PageSize>
                    <Caret open size={12} />
                  </PageSizeStack>
                  <PagerButton aria-label="上一页"><Chevron dir="left" stroke="#ccc" size={14} /></PagerButton>
                  <PagerButton $on>1</PagerButton>
                  <PagerButton aria-label="下一页"><Chevron dir="right" stroke="#ccc" size={14} /></PagerButton>
                </Pager>
                <DialogSlot>双击编辑弹窗</DialogSlot>
                <DataTable>
                  <thead>
                    <tr>
                      <HeadCell>姓名</HeadCell>
                      <HeadCell>英语</HeadCell>
                      <HeadCell>数学</HeadCell>
                      <HeadCell>语文</HeadCell>
                    </tr>
                  </thead>
                  <tbody>
                    {[0, 1, 2].map((row) => (
                      <tr key={row}>
                        {scoreColumns.map((c) => (
                          <Cell key={c} $faded={row > 0}>
                            {row === 0 && c === "chinese" ? (
                              <Picked>
                                {`{{ ${c} }}`}
                                <PickedTag>文本</PickedTag>
                                <PickedTools>
                                  <button aria-label="复制"><CopyIcon /></button>
                                  <button aria-label="删除"><TrashIcon /></button>
                                  <button aria-label="展开"><Caret fill="#fff" /></button>
                                </PickedTools>
                              </Picked>
                            ) : `{{ ${c} }}`}
                          </Cell>
                        ))}
                      </tr>
                    ))}
                  </tbody>
                </DataTable>
                <HScroll />
              </PageBody>
            </Page>
            <ScrollThumb />
            <Floating>
              <FitButton aria-label="适应宽度"><FitIcon /></FitButton>
              <FloatCard>
                <ZoomStep aria-label="缩小">
                  <svg width="12" height="12" viewBox="0 0 12 12" stroke="#999" strokeWidth="3"><path d="M0 5.500h12" /></svg>
                </ZoomStep>
                <ZoomValue aria-label="缩放比例" defaultValue="106.5%" />
                <ZoomStep aria-label="放大">
                  <svg width="12" height="12" viewBox="0 0 12 12" stroke="#999" strokeWidth="2.500"><path d="M0 6h12M6 0v12" /></svg>
                </ZoomStep>
              </FloatCard>
            </Floating>
          </Stage>
        </Centre>

        <Inspector>
          <InspectorTabs>
            <InspectorTab>组件</InspectorTab>
            <InspectorTab $on>属性</InspectorTab>
          </InspectorTabs>
          <Identity>
            <IdentityName><TextShapeIcon />text25</IdentityName>
            <Segmented>
              <Segment $on>属性</Segment>
              <Segment>事件</Segment>
              <Segment>样式</Segment>
            </Segmented>
          </Identity>
          <Section>
            <GroupTitle>基础信息</GroupTitle>
            <Field>
              <FieldLabel id="component-name" text="组件名称" />
              <Box><BareInput id="component-name" defaultValue="text25" /></Box>
            </Field>
            <Field>
              <FieldHead>
                <label htmlFor="permission">是否控制权限</label>
                <InfoIcon />
                <Push><Switch id="permission" type="checkbox" role="switch" /></Push>
              </FieldHead>
            </Field>
            <ExpressionField tight id="visible-if" text="显示条件" prefix="If" />
          </Section>
          <Section>
            <GroupTitle>主要属性</GroupTitle>
            <ExpressionField id="text" text="文本" value="current.item.chinese" code="on" />
            <ChoiceField id="tone" text="颜色" value="默认" />
            <ChoiceField id="size" text="尺寸" value="默认" />
            <ChoiceField id="display" text="展示方式" value="行内" />
            <ChoiceField id="overflow" text="隐藏处理" value="默认不处理" />
          </Section>
          <Section>
            <GroupTitle>样式属性</GroupTitle>
            <ExpressionField id="font-color" text="字体颜色" code="on" />
            <ExpressionField id="background" text="背景颜色" code="on" />
          </Section>
        </Inspector>
      </Workspace>

      <Footer>
        <FooterTabs>
          <PlainTab>日志</PlainTab>
          <PlainTab $on>问题</PlainTab>
          <PlainTab>发布</PlainTab>
          <PlainTab>查找结果</PlainTab>
          <PlainTab>协作</PlainTab>
        </FooterTabs>
        <FooterTools>
          <button aria-label="最小化"><DockIcon kind="line" /></button>
          <button aria-label="半屏"><DockIcon kind="half" /></button>
          <button aria-label="全屏"><DockIcon kind="full" /></button>
        </FooterTools>
      </Footer>
    </Shell>
  );
}
